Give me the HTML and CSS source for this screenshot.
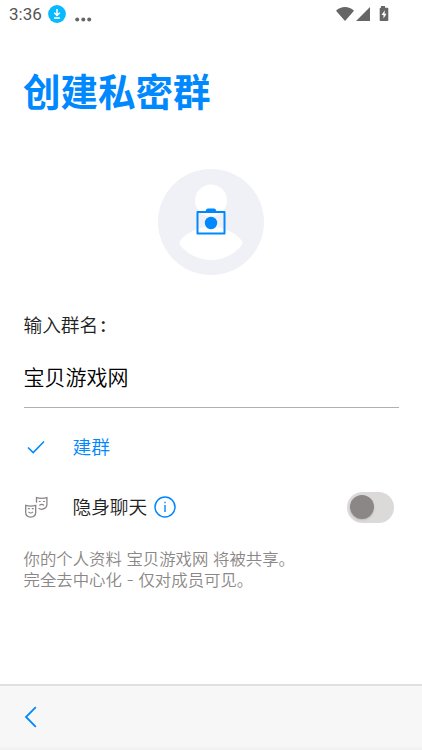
FILE: index.html
```html
<!DOCTYPE html>
<html lang="zh-CN">
<head>
<meta charset="utf-8">
<title>创建私密群</title>
<link rel="stylesheet" href="styles.css">
</head>
<body>
<div class="screen">
  <header class="status">
    <span class="time">3:36</span>
    <svg class="download" width="18" height="18" viewBox="0 0 18 18"><circle cx="9" cy="9" r="8.9" fill="#08b9ff"/><path d="M9 4v6M6.2 7.8 9 10.5l2.8-2.7M6 13h6" fill="none" stroke="#fff" stroke-width="1.5"/></svg>
    <svg class="dots" width="17" height="5" viewBox="0 0 17 5" fill="#666"><circle cx="2.2" cy="2.5" r="2"/><circle cx="8.3" cy="2.5" r="2"/><circle cx="14.2" cy="2.5" r="2"/></svg>
    <svg class="signals" width="54" height="18" viewBox="0 0 54 18" fill="#666"><path d="M0 5.8C5 .8 13 .8 18 5.8L9 16zM34 2v14H20zM45 2.8V1h4v1.8h2.5q.8 0 .8.8v11.6q0 .8-.8.8h-7q-.8 0-.8-.8V3.600q0-.8.8-.8z"/><path d="m48.800 5.200-3.300 4.900h2v3.500l3-4.900h-1.900z" fill="#fff"/></svg>
  </header>
  <main class="content">
    <h1 class="title">创建私密群</h1>
    <svg class="avatar" width="106" height="106" viewBox="0 0 106 106">
      <circle cx="53" cy="53" r="53" fill="#f0f1f6"/>
      <circle cx="53" cy="31.500" r="16" fill="#fff"/>
      <path d="M21.300 74.500C20.500 71 34 57.800 53 57.800S85.500 71 84.700 74.500C82 80 70 91 53 91S24 80 21.300 74.500z" fill="#fff"/>
      <path d="M39.500 43h27v21.500h-27z" fill="none" stroke="#0088ff" stroke-width="2" stroke-linejoin="round"/>
      <path d="M46 43q1.300 0 1.800-1.600Q48.300 39.500 50 39.500h6q1.700 0 2.200 1.900Q58.700 43 60 43z" fill="#0088ff"/>
      <circle cx="53" cy="54" r="6.200" fill="#0088ff"/>
    </svg>
    <label class="label" for="group">输入群名<span class="colon">:</span></label>
    <input class="field" id="group" value="宝贝游戏网">
    <div class="row action">
      <svg class="icon" width="26" height="26" viewBox="0 0 26 26"><path d="m5 13.500 5.200 5.100L21 7.500" fill="none" stroke="#0088ff" stroke-width="1.500"/></svg>
      <span>建群</span>
    </div>
    <div class="row">
      <svg class="icon" width="26" height="26" viewBox="0 0 26 26" fill="none" stroke="#898585" stroke-width="1.300"><path d="M2.700 11.400q5 1.500 10 0v7q0 4-5 4.800-5-.8-5-4.800zM13.500 8.800V3.600q5.200 1.400 10.400 0v7q0 3.900-5.200 4.800-1.700-.3-3.100-1.100"/><path d="M4.800 14.600h2m2 0h2M5.500 17.900q2.200 2.300 4.500 0M15.800 7.500h1.800m2.400 0h1.900M16.400 11.500q2.300-2.200 4.600 0" stroke-width="1.100"/></svg>
      <span>隐身聊天</span>
      <svg class="info" width="22" height="22" viewBox="0 0 22 22"><circle cx="11" cy="11" r="10" fill="none" stroke="#0088ff" stroke-width="1.500"/><path d="M11 9v7M11 5.800v1.500" stroke="#0088ff" stroke-width="1.400"/></svg>
      <span class="switch"><span class="knob"></span></span>
    </div>
    <p class="note">你的个人资料 宝贝游戏网 将被共享<span class="stop">。</span><br>完全去中心化 - 仅对成员可见<span class="stop">。</span></p>
  </main>
  <footer class="bottom">
    <svg width="14" height="22" viewBox="0 0 14 22"><path d="M11.800 1.200 2 11l9.800 9.800" fill="none" stroke="#0088ff" stroke-width="1.800"/></svg>
  </footer>
</div>
</body>
</html>
```
FILE: styles.css
```css
* { box-sizing: border-box; }
body { margin: 0; background: #fff; font-family: Inter, "Noto Sans CJK SC", sans-serif; font-weight: 350; color: #222; }
.screen { height: 750px; display: flex; flex-direction: column; overflow: hidden; }
.status { height: 28px; flex: none; display: flex; align-items: center; padding: 0 32px 0 9px; }
.time { width: 39px; font: 400 17px/28px Roboto, sans-serif; color: #555; letter-spacing: 0; }
.dots { margin: 11px 0 0 9px; }
.signals { margin-left: auto; margin-top: -1px; }
.content { flex: 1; display: flex; flex-direction: column; padding: 0 24px; }
.title { margin: 43px 0 0 -1px; font-size: 37.5px; line-height: 44px; font-weight: 700; color: #0088ff; }
.avatar { margin: 54px auto 0; flex: none; }
.label { margin: 36px 0 0 -0.500px; font-size: 18.7px; line-height: 30px; }
.colon { margin-left: 2px; font-size: 20px; font-weight: 500; line-height: 0; }
.field { width: 375px; height: 49px; margin: 18px 0 0 -0.500px; padding: 0 0 14px; border: 0; border-bottom: 1px solid #b0b0b0; border-radius: 0; outline: 0; background: transparent; font: 350 21px/34px Inter, "Noto Sans CJK SC", sans-serif; color: #000; }
.row { height: 60px; flex: none; display: flex; align-items: center; font-size: 18.7px; line-height: 30px; }
.row > span:not(.switch) { margin: 2px 0 0 -0.500px; }
.action { margin-top: 9px; color: #0088ff; }
.icon { margin-right: 24px; margin-left: -1px; flex: none; }
.info { margin-left: 6.500px; }
.switch { width: 47px; height: 31px; margin: 0 4px 0 auto; padding: 3px; border-radius: 16px; background: #dcdad9; }
.knob { display: block; width: 24px; height: 24px; margin-top: 0.500px; border-radius: 50%; background: #8b8786; box-shadow: 0 1px 2px #bbb; }
.note { margin: 12px 0 0 -0.500px; font-size: 16.4px; line-height: 21px; color: #8b8786; white-space: nowrap; }
.stop { font-family: "Noto Sans CJK SC", sans-serif; line-height: 0; }
.bottom { height: 66px; flex: none; display: flex; align-items: center; padding: 0 0 2px 24px; border-top: 2px solid #e0e0e0; background: linear-gradient(#f7f7f7 60px, #f0f0f0); }
```
